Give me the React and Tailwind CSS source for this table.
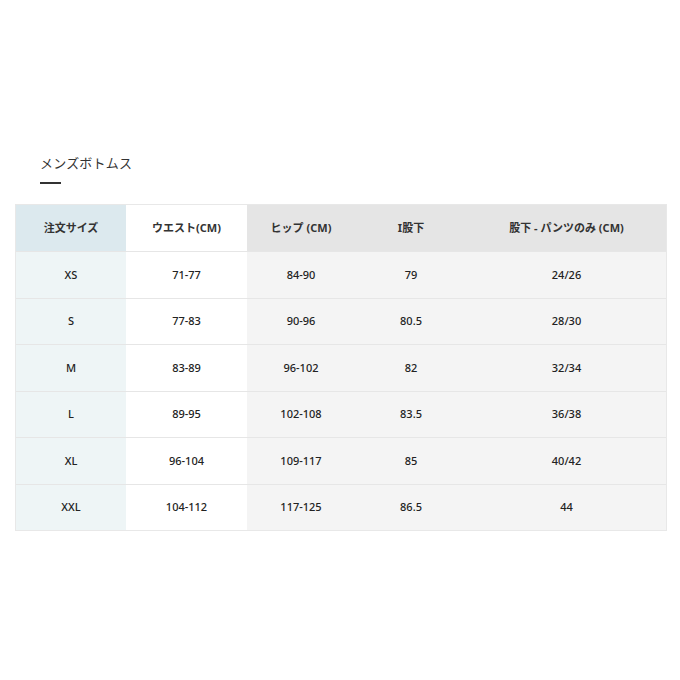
const headers = ['注文サイズ', 'ウエスト(CM)', 'ヒップ (CM)', 'I股下', '股下 - パンツのみ (CM)'];

const rows = [
  ['XS', '71-77', '84-90', '79', '24/26'],
  ['S', '77-83', '90-96', '80.5', '28/30'],
  ['M', '83-89', '96-102', '82', '32/34'],
  ['L', '89-95', '102-108', '83.5', '36/38'],
  ['XL', '96-104', '109-117', '85', '40/42'],
  ['XXL', '104-112', '117-125', '86.5', '44'],
];

const widths = ['w-[110px]', 'w-[121px]', 'w-[108px]', 'w-[112px]', 'flex-1'];
const headBg = ['bg-[#dce9ee]', 'bg-white', 'bg-[#e5e5e5]', 'bg-[#e5e5e5]', 'bg-[#e5e5e5]'];
const bodyBg = ['bg-[#eef5f6]', 'bg-white', 'bg-[#f4f4f4]', 'bg-[#f4f4f4]', 'bg-[#f4f4f4]'];

export default function App() {
  return (
    <div
      className="w-[680px] h-[680px] bg-white text-[#333]"
      style={{ fontFamily: '"Noto Sans", "Noto Sans CJK JP", sans-serif' }}
    >
      <div className="pt-[154px] pl-[40px]">
        <h2 className="text-[13px] leading-[18px] tracking-[0.2px] text-[#333]">メンズボトムス</h2>
        <div className="mt-[10px] w-[21px] h-[2px] bg-[#333]" />
      </div>

      <div className="mt-[20px] ml-[15px] w-[652px] border border-[#e8e8e8]">
        <div className="flex h-[46px]">
          {headers.map((h, i) => (
            <div
              key={i}
              className={`${widths[i]} ${headBg[i]} flex items-center justify-center text-[11px] font-bold text-[#333]`}
            >
              {h}
            </div>
          ))}
        </div>
        {rows.map((r, ri) => (
          <div key={ri} className="flex h-[46.5px] border-t border-[#e6e6e6]">
            {r.map((c, ci) => (
              <div
                key={ci}
                className={`${widths[ci]} ${bodyBg[ci]} flex items-center justify-center text-[11px] font-medium text-[#222]`}
              >
                {c}
              </div>
            ))}
          </div>
        ))}
      </div>
    </div>
  );
}
